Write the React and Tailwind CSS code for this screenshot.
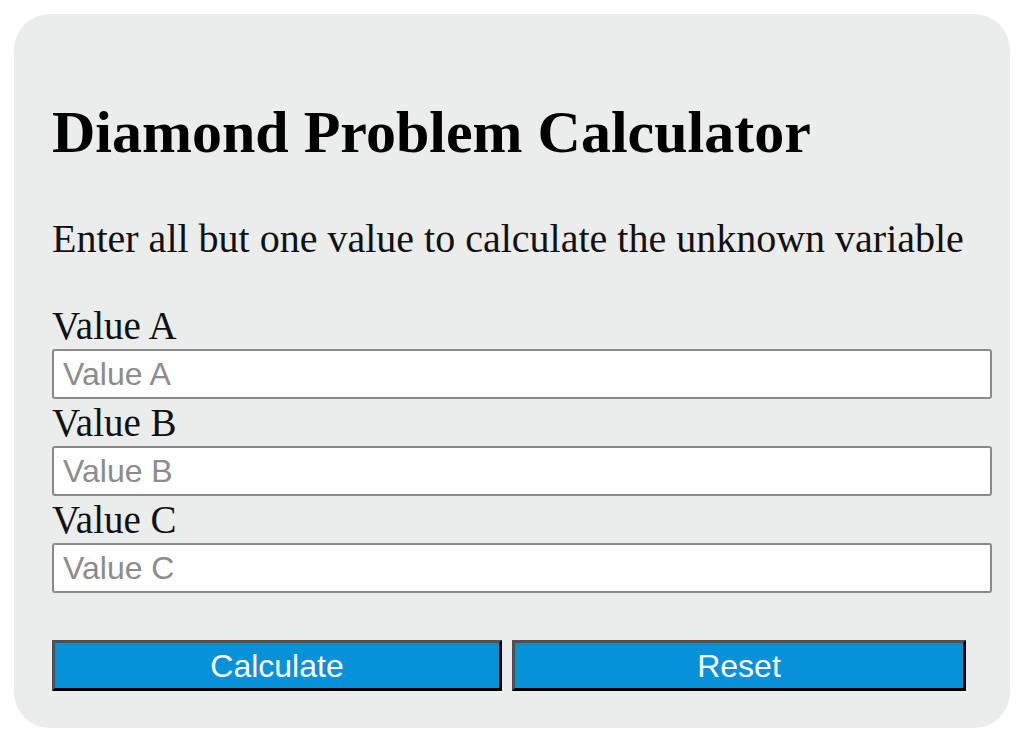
import React from 'react';

const fields = ['Value A', 'Value B', 'Value C'];

export default function App() {
    return (
        <div className="min-h-screen bg-white p-[14px] font-['Liberation_Serif',serif] text-black">
            <div className="w-[996px] h-[714px] rounded-[36px] bg-[#ebecec] pl-[38px] pt-[85px]">
                <h1 className="text-[60px] font-bold leading-[66px] m-0">Diamond Problem Calculator</h1>
                <p className="text-[40px] leading-[44px] mt-[52px] text-[#111]">
                    Enter all but one value to calculate the unknown variable
                </p>

                <div className="mt-[41px] flex flex-col w-[940px]">
                    {fields.map((name) => (
                        <div key={name} className="flex flex-col">
                            <label className="text-[39px] leading-[47px] text-[#111]">{name}</label>
                            <input
                                type="text"
                                placeholder={name}
                                className="h-[50px] w-full rounded-[3px] border-2 border-[#8a8a8a] bg-white px-[9px] font-['Liberation_Sans',Arial,sans-serif] text-[32px] text-black placeholder:text-[#8c8c8c] outline-none"
                            />
                        </div>
                    ))}
                </div>

                <div className="mt-[47px] flex gap-[10px]">
                    <button className="w-[450px] h-[51px] border-[3px] border-t-[#505050] border-l-[#505050] border-b-black border-r-black bg-[#0791d9] font-['Liberation_Sans',Arial,sans-serif] text-[32px] leading-none text-white">
                        Calculate
                    </button>
                    <button className="w-[454px] h-[51px] border-[3px] border-t-[#505050] border-l-[#505050] border-b-black border-r-black bg-[#0791d9] font-['Liberation_Sans',Arial,sans-serif] text-[32px] leading-none text-white">
                        Reset
                    </button>
                </div>
            </div>
        </div>
    );
}
